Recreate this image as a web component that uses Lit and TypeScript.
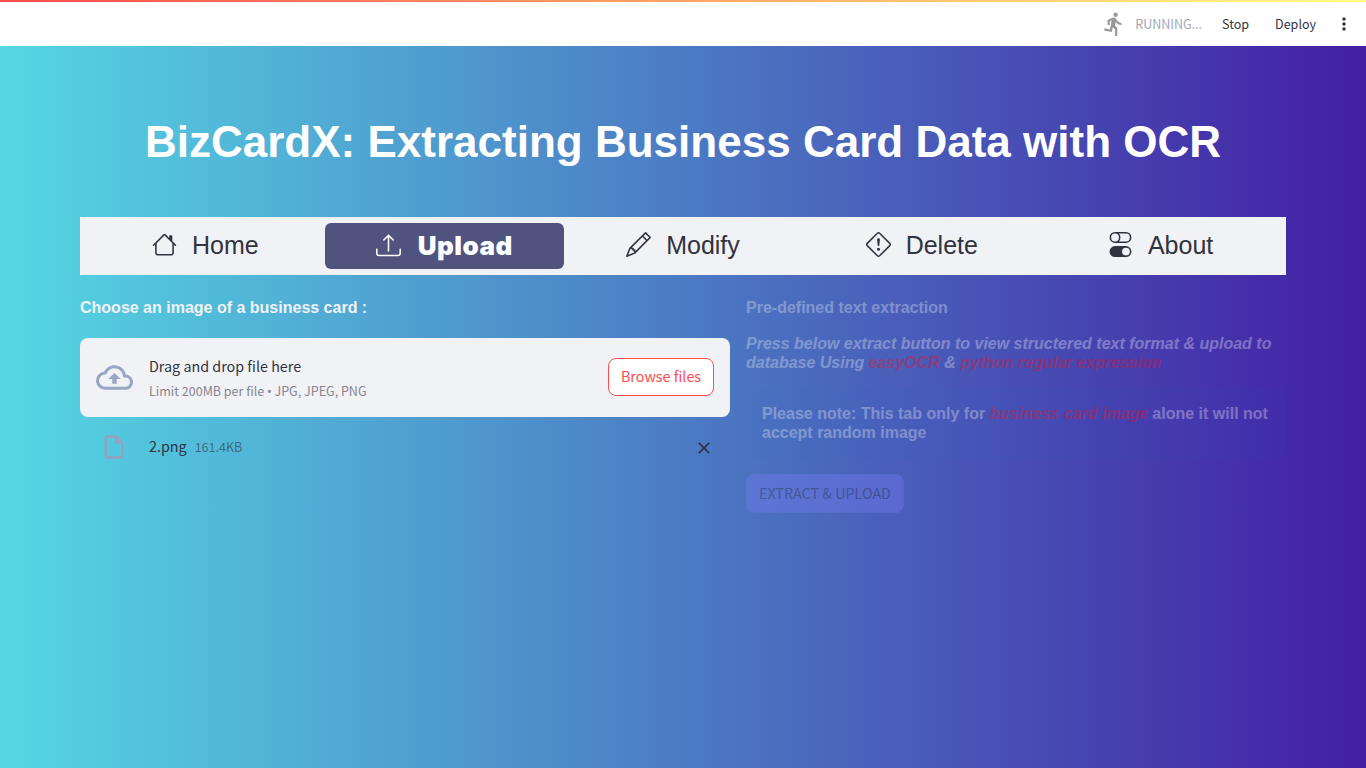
import { LitElement, html, css, svg } from "lit";
import { customElement } from "lit/decorators.js";
import { classMap } from "lit/directives/class-map.js";

interface NavItem {
  label: string;
  path: string;
  active?: boolean;
}

const NAV: NavItem[] = [
  {
    label: "Home",
    path: "M2 13.5V7h1v6.5a.5.5 0 0 0 .5.5h9a.5.5 0 0 0 .5-.5V7h1v6.5a1.5 1.5 0 0 1-1.5 1.5h-9A1.5 1.5 0 0 1 2 13.5zm11-11V6l-2-2V2.5a.5.5 0 0 1 .5-.5h1a.5.5 0 0 1 .5.5zM7.293 1.5a1 1 0 0 1 1.414 0l6.647 6.646a.5.5 0 0 1-.708.708L8 2.207 1.354 8.854a.5.5 0 1 1-.708-.708L7.293 1.5z",
  },
  {
    label: "Upload",
    active: true,
    path: "M.5 9.9a.5.5 0 0 1 .5.5v2.5a1 1 0 0 0 1 1h12a1 1 0 0 0 1-1v-2.5a.5.5 0 0 1 1 0v2.5a2 2 0 0 1-2 2H2a2 2 0 0 1-2-2v-2.5a.5.5 0 0 1 .5-.5zM7.646 1.146a.5.5 0 0 1 .708 0l3 3a.5.5 0 0 1-.708.708L8.5 2.707V11.5a.5.5 0 0 1-1 0V2.707L5.354 4.854a.5.5 0 1 1-.708-.708l3-3z",
  },
  {
    label: "Modify",
    path: "M12.146.146a.5.5 0 0 1 .708 0l3 3a.5.5 0 0 1 0 .708l-10 10a.5.5 0 0 1-.168.11l-5 2a.5.5 0 0 1-.65-.65l2-5a.5.5 0 0 1 .11-.168l10-10zM11.207 2.5 13.5 4.793 14.793 3.5 12.5 1.207 11.207 2.5zm1.586 3L10.5 3.207 4 9.707V10h.5a.5.5 0 0 1 .5.5v.5h.5a.5.5 0 0 1 .5.5v.5h.293l6.5-6.5zm-9.761 5.175-.106.106-1.528 3.821 3.821-1.528.106-.106A.5.5 0 0 1 5 12.5V12h-.5a.5.5 0 0 1-.5-.5V11h-.5a.5.5 0 0 1-.468-.325z",
  },
  {
    label: "Delete",
    path: "M6.95.435c.58-.58 1.52-.58 2.1 0l6.515 6.516c.58.58.58 1.519 0 2.098L9.05 15.565c-.58.58-1.519.58-2.098 0L.435 9.05a1.482 1.482 0 0 1 0-2.098L6.95.435zm1.4.7a.495.495 0 0 0-.7 0L1.134 7.65a.495.495 0 0 0 0 .7l6.516 6.516a.495.495 0 0 0 .7 0l6.516-6.516a.495.495 0 0 0 0-.7L8.35 1.134zM7.002 11a1 1 0 1 1 2 0 1 1 0 0 1-2 0zM7.1 4.995a.905.905 0 1 1 1.8 0l-.35 3.507a.552.552 0 0 1-1.1 0L7.1 4.995z",
  },
  {
    label: "About",
    path: "M4.5 9a3.5 3.5 0 1 0 0 7h7a3.5 3.5 0 1 0 0-7h-7zm7 6a2.5 2.5 0 1 1 0-5 2.5 2.5 0 0 1 0 5zm-7-14a2.5 2.5 0 1 0 0 5 2.5 2.5 0 0 0 0-5zm2.45 0A3.49 3.49 0 0 1 8 3.5 3.49 3.49 0 0 1 6.95 6h4.55a2.5 2.5 0 0 0 0-5H6.95zM4.5 0h7a3.5 3.5 0 1 1 0 7h-7a3.5 3.5 0 1 1 0-7z",
  },
];

const ICONS = {
  run: "M13.49 5.48c1.1 0 2-.9 2-2s-.9-2-2-2-2 .9-2 2 .9 2 2 2zm-3.6 13.9l1-4.4 2.1 2v6h2v-7.5l-2.1-2 .6-3c1.3 1.5 3.3 2.5 5.5 2.5v-2c-1.9 0-3.5-1-4.3-2.4l-1-1.6c-.4-.6-1-1-1.7-1-.3 0-.5.1-.8.1l-5.2 2.2v4.7h2v-3.4l1.8-.7-1.6 8.1-4.9-1-.4 2 7 1.4z",
  more: "M12 8c1.1 0 2-.9 2-2s-.9-2-2-2-2 .9-2 2 .9 2 2 2zm0 2c-1.1 0-2 .9-2 2s.9 2 2 2 2-.9 2-2-.9-2-2-2zm0 6c-1.1 0-2 .9-2 2s.9 2 2 2 2-.9 2-2-.9-2-2-2z",
  cloud: "M19.35 10.04A7.49 7.49 0 0012 4C9.11 4 6.6 5.64 5.35 8.04A5.994 5.994 0 000 14c0 3.31 2.69 6 6 6h13c2.76 0 5-2.24 5-5 0-2.64-2.05-4.78-4.65-4.96zM19 18H6c-2.21 0-4-1.79-4-4 0-2.05 1.53-3.76 3.56-3.97l1.07-.11.5-.95A5.469 5.469 0 0112 6c2.62 0 4.88 1.86 5.39 4.43l.3 1.5 1.53.11A2.98 2.98 0 0122 15c0 1.65-1.35 3-3 3zM8 13h2.55v3h2.9v-3H16l-4-4z",
  file: "M14 2H6c-1.1 0-1.99.9-1.99 2L4 20c0 1.1.89 2 1.99 2H18c1.1 0 2-.9 2-2V8l-6-6zM6 20V4h7v5h5v11H6z",
  close: "M19 6.41L17.59 5 12 10.59 6.41 5 5 6.41 10.59 12 5 17.59 6.41 19 12 13.41 17.59 19 19 17.59 13.41 12z",
};

const icon = (d: string, size: number, box = 24) => html`<svg
  width=${size}
  height=${size}
  viewBox="0 0 ${box} ${box}"
  fill="currentColor"
  aria-hidden="true"
>${svg`<path d=${d}></path>`}</svg>`;

@customElement("top-bar")
class TopBar extends LitElement {
  static styles = css`
    :host {
      display: block;
      flex: none;
      height: 46px;
      background: #fff;
      font: 400 12.53px/20px "Noto Sans CJK SC", sans-serif;
      color: #31333f;
    }
    .strip {
      height: 2px;
      background: linear-gradient(90deg, #ff4b4b, #fffd80);
    }
    .row {
      height: 44px;
      display: flex;
      align-items: center;
      justify-content: flex-end;
      padding-right: 12px;
    }
    svg { display: block; }
    .man { color: #999; margin-right: 8px; }
    .running { color: #a3a8b8; margin-right: 20px; }
    .stop { margin-right: 26px; }
    .deploy { margin-right: 18px; }
  `;
  render() {
    return html`<div class="strip"></div>
      <div class="row">
        <span class="man">${icon(ICONS.run, 26)}</span>
        <span class="running">RUNNING...</span>
        <span class="stop">Stop</span>
        <span class="deploy">Deploy</span>
        ${icon(ICONS.more, 20)}
      </div>`;
  }
}

@customElement("nav-menu")
class NavMenu extends LitElement {
  static styles = css`
    :host {
      display: block;
      background: #fff;
      height: 58px;
    }
    .bar {
      box-sizing: border-box;
      height: 58px;
      display: flex;
      padding: 6px;
      background: #f0f2f6;
      border-radius: 4px;
    }
    .item {
      box-sizing: border-box;
      flex: 1 1 0;
      display: flex;
      align-items: center;
      justify-content: center;
      gap: 15px;
      padding-bottom: 2px;
      border-radius: 6px;
      color: #31333f;
      font: 400 25px/44px "Liberation Sans", Arial, sans-serif;
    }
    .item.active { background: #51537f; color: #fff; padding-bottom: 0; gap: 17px; }
    .active .label { font: 900 26px/46px Inter, sans-serif; letter-spacing: 0.5px; }
    svg { display: block; }
    .glyph { padding-bottom: 2px; }
    .active .glyph { padding-bottom: 1px; }
  `;
  render() {
    return html`<nav class="bar">
      ${NAV.map(
        (n) => html`<a class=${classMap({ item: true, active: !!n.active })}>
          <span class="glyph">${icon(n.path, 25, 16)}</span><span class="label">${n.label}</span>
        </a>`,
      )}
    </nav>`;
  }
}

@customElement("file-uploader")
class FileUploader extends LitElement {
  static styles = css`
    :host {
      display: block;
      font: 400 14.33px/24px "Noto Sans CJK SC", sans-serif;
      color: #31333f;
    }
    svg { display: block; }
    .drop {
      box-sizing: border-box;
      height: 79px;
      display: flex;
      align-items: center;
      padding: 0 16px;
      background: #f0f2f6;
      border-radius: 8px;
    }
    .cloud { color: #98a5c5; margin-right: 16px; }
    .text { flex: 1; }
    .limit { font-size: 12.53px; line-height: 20px; color: #85868e; margin-top: 3px; }
    .dot { font-family: "Noto Sans", sans-serif; line-height: 1; }
    .browse {
      box-sizing: border-box;
      width: 106px;
      height: 38px;
      margin-bottom: 2px;
      border: 1px solid #ff4b4b;
      border-radius: 8px;
      background: #fff;
      color: #ff4b4b;
      font: inherit;
      padding: 0 0 2px;
      line-height: 34px;
    }
    .file {
      display: flex;
      align-items: center;
      height: 28px;
      padding: 0 16px 0 20px;
      margin-top: 16px;
    }
    .doc { color: #989fc0; margin-right: 21px; }
    .name { padding-bottom: 2px; }
    .size { font-size: 12.53px; margin-left: 8px; color: rgba(49, 51, 63, 0.6); flex: 1; }
    .close { padding-top: 1px; }
  `;
  render() {
    return html`<div class="drop">
        <span class="cloud">${icon(ICONS.cloud, 37)}</span>
        <div class="text">
          <div>Drag and drop file here</div>
          <div class="limit">Limit 200MB per file <span class="dot">•</span> JPG, JPEG, PNG</div>
        </div>
        <button class="browse">Browse files</button>
      </div>
      <div class="file">
        <span class="doc">${icon(ICONS.file, 28)}</span>
        <span class="name">2.png</span><span class="size">161.4KB</span>
        <span class="close">${icon(ICONS.close, 20)}</span>
      </div>`;
  }
}

@customElement("app-root")
class AppRoot extends LitElement {
  static styles = css`
    :host {
      display: flex;
      flex-direction: column;
      height: 768px;
      overflow: hidden;
      background: linear-gradient(90deg, #55d7e3, #431fa4);
      font: 700 16px/19.2px "Liberation Sans", Arial, sans-serif;
      color: #f0f2f6;
    }
    main { padding: 70px 80px 0; }
    h1 {
      margin: 0 0 49px;
      font-size: 44px;
      line-height: 52px;
      letter-spacing: 0.01px;
      text-align: center;
      color: #fff;
      white-space: nowrap;
    }
    .columns {
      display: grid;
      grid-template-columns: 650px 540px;
      gap: 16px;
      padding-top: 23px;
    }
    .heading { margin: 0 0 21px; }
    .stale { opacity: 0.33; }
    .stale .heading { margin-bottom: 17px; }
    .hint { margin: 0 0 14px; font-style: italic; }
    .key { color: #ff0c0c; font-style: italic; }
    .note {
      box-sizing: border-box;
      height: 72px;
      padding: 17px 16px;
      border-radius: 8px;
      background: rgba(28, 131, 225, 0.1);
    }
    .extract {
      box-sizing: border-box;
      width: 158px;
      height: 39px;
      margin-top: 15px;
      padding: 0 0 2px;
      border: 1px solid #6f80e0;
      border-radius: 8px;
      background: #8080ff;
      color: #31333f;
      font: 400 14.33px/35px "Noto Sans CJK SC", sans-serif;
    }
  `;
  render() {
    return html`<top-bar></top-bar>
      <main>
        <h1>BizCardX: Extracting Business Card Data with OCR</h1>
        <nav-menu></nav-menu>
        <div class="columns">
          <section>
            <p class="heading">Choose an image of a business card :</p>
            <file-uploader></file-uploader>
          </section>
          <section class="stale">
            <p class="heading">Pre-defined text extraction</p>
            <p class="hint">
              Press below extract button to view structered text format &amp; upload to database Using
              <span class="key">easyOCR</span> &amp; <span class="key">python regular expression</span>
            </p>
            <div class="note">
              Please note: This tab only for <span class="key">business card image</span> alone it will
              not accept random image
            </div>
            <button class="extract">EXTRACT &amp; UPLOAD</button>
          </section>
        </div>
      </main>`;
  }
}
